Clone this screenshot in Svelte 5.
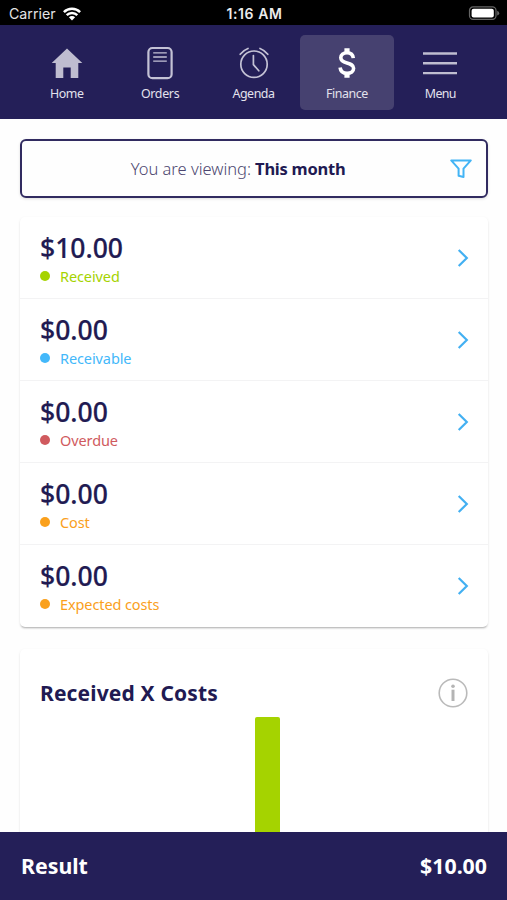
<script>
  const tabs = [
    { id: 'home', label: 'Home', ls: -0.4 },
    { id: 'orders', label: 'Orders', ls: -0.3 },
    { id: 'agenda', label: 'Agenda', ls: -0.45 },
    { id: 'finance', label: 'Finance', ls: -0.4, active: true },
    { id: 'menu', label: 'Menu', ls: -0.6 }
  ];
  const rows = [
    { amount: '$10.00', label: 'Received', color: '#a5d300' },
    { amount: '$0.00', label: 'Receivable', color: '#43b8fa' },
    { amount: '$0.00', label: 'Overdue', color: '#d05a5e' },
    { amount: '$0.00', label: 'Cost', color: '#faa01c' },
    { amount: '$0.00', label: 'Expected costs', color: '#faa01c' }
  ];
</script>

<div class="screen">
  <div class="status">
    <div class="carrier">
      <span>Carrier</span>
      <svg width="18" height="14" viewBox="0 0 18 14">
        <g fill="none" stroke="#fff" stroke-width="2.5">
          <path d="M0.9 5.1a11.5 11.5 0 0 1 16.2 0" />
          <path d="M3.7 8.1a7.5 7.5 0 0 1 10.6 0" />
        </g>
        <path d="M9 13.4 5.9 10.3a4.4 4.4 0 0 1 6.2 0z" fill="#fff" />
      </svg>
    </div>
    <span class="time">1:16 AM</span>
    <svg class="battery" width="32" height="16" viewBox="0 0 32 16">
      <rect x="1.5" y="0.9" width="26.5" height="12.5" rx="3.6" fill="none" stroke="#666" stroke-width="1.2" />
      <rect x="3.6" y="2.8" width="22.2" height="8.8" rx="2" fill="#fff" />
      <path d="M29.2 4.8q2 .8 2 2.4t-2 2.4z" fill="#666" />
    </svg>
  </div>

  <nav>
    {#each tabs as t}
      <div class="tab" class:active={t.active}>
        <svg width="36" height="36" viewBox="0 0 36 36">
          {#if t.id === 'home'}
            <path d="M18 2.4 33.3 17H29.3V31.9H21.7V21.6H14.3V31.9H6.7V17H2.7z" fill="#bfbdd0" />
          {:else if t.id === 'orders'}
            <g fill="none" stroke="#c4c2d5">
              <rect x="6.4" y="2" width="23.2" height="30.2" rx="4" stroke-width="2.2" />
              <path d="M11.2 6.8h13.6M11.2 11h13.6M11.2 15.2h13.6" stroke-width="1.3" />
            </g>
          {:else if t.id === 'agenda'}
            <g fill="none" stroke="#c4c2d5" stroke-width="1.7" stroke-linecap="round">
              <circle cx="18" cy="18.2" r="13.2" />
              <path d="M17.4 9.6V18.6L22.8 24.8M4.2 8.3Q7.2 4.3 12 2.5M31.8 8.3Q28.8 4.3 24 2.5" />
            </g>
          {:else if t.id === 'finance'}
            <path d="M18 2.2V7M18 27V31.8" fill="none" stroke="#fff" stroke-width="5.2" />
            <path d="M24.3 12.2C24 8.6 21.6 6.7 18 6.7C14.3 6.7 11.8 8.7 11.8 11.7C11.8 15.1 14.8 16 18 16.9C21.6 17.9 24.6 18.8 24.6 22.3C24.6 25.4 21.9 27.3 18.1 27.3C14 27.3 11.5 25.2 11.1 21.5" fill="none" stroke="#fff" stroke-width="3.6" />
          {:else}
            <path d="M1 7.5H35M1 17.3H35M1 27.1H35" stroke="#bfbdd0" stroke-width="2.4" />
          {/if}
        </svg>
        <span style="letter-spacing:{t.ls}px">{t.label}</span>
      </div>
    {/each}
  </nav>

  <main>
    <div class="filter">
      <div class="viewing"><span>You are viewing:</span> <b>This month</b></div>
      <svg width="24" height="22" viewBox="0 0 24 22">
        <path d="M2.2 2.4H21.8L14.5 10.6V19L9.6 17.7V10.6z" fill="none" stroke="#43b4f5" stroke-width="2" stroke-linejoin="round" />
      </svg>
    </div>

    <section class="card list">
      {#each rows as r}
        <div class="row">
          <div>
            <div class="amount">{r.amount}</div>
            <div class="label" style="color:{r.color}"><i></i><span>{r.label}</span></div>
          </div>
          <svg width="12" height="20" viewBox="0 0 12 20">
            <path d="M1.7 2 9.8 10 1.7 18" fill="none" stroke="#43b0f2" stroke-width="2.2" />
          </svg>
        </div>
      {/each}
    </section>

    <section class="card chart">
      <header>
        <h2>Received X Costs</h2>
        <svg width="30" height="30" viewBox="0 0 30 30">
          <circle cx="15" cy="15" r="13.8" fill="none" stroke="#bababa" stroke-width="1.6" />
          <circle cx="15" cy="8.3" r="1.8" fill="#b4b4b4" />
          <path d="M15 11.7V23" stroke="#b4b4b4" stroke-width="3" />
        </svg>
      </header>
      <div class="bar"></div>
    </section>
  </main>

  <footer><span class="result">Result</span><span class="total">$10.00</span></footer>
</div>

<style>
  .screen { width: 507px; height: 900px; display: flex; flex-direction: column; overflow: hidden; background: #fefefe; font-family: "Noto Sans", sans-serif; color: #211a52; }
  svg { display: block; flex: none; }
  .status { height: 25px; flex: none; box-sizing: border-box; padding: 2px 7px 0 9px; background: #000; color: #fff; display: grid; grid-template-columns: 1fr auto 1fr; align-items: center; font-family: Inter, sans-serif; font-size: 14.2px; }
  .carrier { display: flex; align-items: center; gap: 7px; color: #e4e4e4; }
  .time { font-weight: 600; font-size: 14px; letter-spacing: 0.6px; color: #ececec; }
  .battery { justify-self: end; }
  nav { height: 94px; flex: none; box-sizing: border-box; padding: 10px 20px; background: #241f58; display: flex; }
  .tab { flex: 1; height: 75px; box-sizing: border-box; padding-top: 11px; border-radius: 5px; display: flex; flex-direction: column; align-items: center; color: #e3e2ed; font-size: 12.4px; line-height: 18px; }
  .tab span { margin-top: 3px; }
  .active { background: #464170; }
  main { flex: 1; min-height: 0; overflow: hidden; padding: 20px 19px 0 20px; }
  .filter { height: 59px; box-sizing: border-box; border: 2px solid #312b60; border-radius: 6px; display: flex; align-items: center; padding: 0 13px 0 5px; box-shadow: 0 1px 3px #0002; }
  .viewing { flex: 1; text-align: center; font-size: 16.5px; white-space: nowrap; letter-spacing: -0.2px; }
  .viewing span { color: #4c466f; font-weight: 300; letter-spacing: 0; }
  .viewing b { letter-spacing: -0.25px; }
  .card { background: #fff; border-radius: 5px; box-shadow: 0 2px 2px -1px #0004, 0 1px 3px #00000014; }
  .list { margin-top: 19px; }
  .row { height: 82px; box-sizing: border-box; border-bottom: 1px solid #f3f3f4; padding: 13px 19px 0 20px; display: flex; justify-content: space-between; }
  .row:last-child { border: 0; }
  .row > svg { margin-top: 18px; }
  .amount { font-size: 26.5px; font-weight: 500; line-height: 36px; -webkit-text-stroke: 0.2px currentColor; }
  .label { display: flex; align-items: center; gap: 10px; font-size: 14.5px; line-height: 20px; letter-spacing: -0.1px; }
  .label i { width: 10px; height: 10px; border-radius: 50%; background: currentColor; }
  .chart { margin-top: 22px; height: 400px; }
  header { display: flex; align-items: center; justify-content: space-between; padding: 29px 20px 0; height: 30px; }
  h2 { margin: 0; font-size: 21px; font-weight: 700; line-height: 30px; letter-spacing: 0.15px; }
  .bar { width: 25px; height: 300px; margin: 9px 0 0 235px; border-radius: 2px; background: #a5d300; }
  footer { height: 68px; flex: none; box-sizing: border-box; padding: 0 20px 2px 21px; background: #241f58; color: #fff; display: flex; align-items: center; justify-content: space-between; font-size: 21.3px; font-weight: 700; }
</style>
